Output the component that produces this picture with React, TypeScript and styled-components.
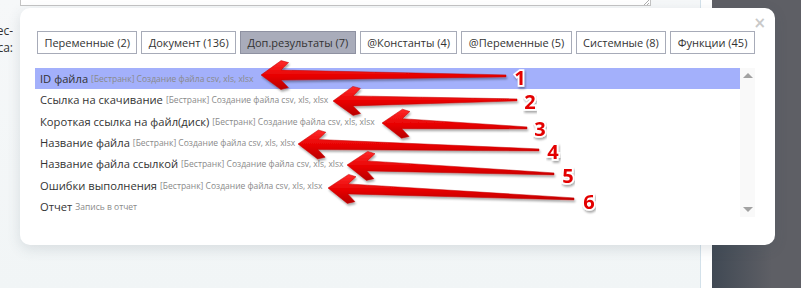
import React from "react";
import styled, { createGlobalStyle } from "styled-components";

const GlobalStyle = createGlobalStyle`
  html, body { margin: 0; padding: 0; }
  body {
    background: #f3f6f7;
    font-family: "Open Sans", "Noto Sans", sans-serif;
  }
`;

const Page = styled.div`
  position: relative;
  width: 801px;
  height: 288px;
  overflow: hidden;
  display: grid;
  grid-template-columns: 700px 1px 11px 1fr;
  background: #f3f6f7;
`;

const Main = styled.div`
  display: flex;
  flex-direction: column;
  background: linear-gradient(#f6f8f9, #f1f5f6);
`;

const TextareaRow = styled.div`
  padding-left: 20px;
`;

const TextareaStub = styled.div`
  position: relative;
  width: 629px;
  height: 5px;
  background: #fff;
  border: 1px solid #c4c4c4;
  border-top: none;
`;

const Grip = styled.svg`
  position: absolute;
  right: 1px;
  bottom: 0;
`;

const FieldLabel = styled.div`
  width: 13px;
  margin-top: 16px;
  overflow: hidden;
  display: flex;
  flex-direction: column;
  align-items: flex-end;
  font-size: 12px;
  line-height: 17px;
  color: #333;
  white-space: nowrap;
`;

const Divider = styled.div`
  background: #d3e1ea;
`;

const WhiteStrip = styled.div`
  background: #ffffff;
`;

const DarkPanel = styled.div`
  background-color: #5e5f65;
  background-image: linear-gradient(
    to right,
    rgba(40, 55, 70, 0.55),
    rgba(40, 55, 70, 0) 60px
  );
  background-size: 100% 50px;
  background-position: bottom left;
  background-repeat: no-repeat;
`;

const Modal = styled.div`
  position: absolute;
  left: 20px;
  top: 8px;
  width: 755px;
  height: 237px;
  box-sizing: border-box;
  background: #fff;
  border-radius: 10px;
  box-shadow: 0 4px 14px rgba(60, 80, 90, 0.14);
  padding: 23px 20px 0 15px;
  display: flex;
  flex-direction: column;
`;

const Close = styled.span`
  position: absolute;
  top: 7px;
  right: 9px;
  font-family: "DejaVu Sans", sans-serif;
  font-size: 15px;
  font-weight: bold;
  color: #c9c9c9;
  line-height: 16px;
`;

const Tabs = styled.div`
  display: flex;
  gap: 4px;
  padding-left: 2px;
`;

const Tab = styled.div<{ $active?: boolean }>`
  height: 23px;
  box-sizing: border-box;
  padding: 0 6.4px;
  display: flex;
  align-items: center;
  border: 1px solid ${(p) => (p.$active ? "#8e91a1" : "#a7abb8")};
  background: ${(p) => (p.$active ? "#a9acba" : "#fff")};
  color: #333;
  font-size: 11px;
  white-space: nowrap;
`;

const ListArea = styled.div`
  display: flex;
  margin-top: 14px;
`;

const Rows = styled.div`
  width: 705px;
  display: flex;
  flex-direction: column;
`;

const Row = styled.div<{ $selected?: boolean }>`
  height: 21.33px;
  display: flex;
  align-items: center;
  padding-left: 5px;
  white-space: nowrap;
  background: ${(p) => (p.$selected ? "#a3b0fb" : "transparent")};
`;

const RowTitle = styled.span`
  font-size: 11.2px;
  color: #333;
`;

const RowDesc = styled.span`
  font-size: 8.5px;
  color: #8a8a8a;
  margin-left: 3px;
`;

const Scrollbar = styled.div`
  width: 15px;
  height: 149px;
  background: #f9f9f9;
  display: flex;
  flex-direction: column;
  justify-content: space-between;
  align-items: center;
  padding: 5px 0;
  box-sizing: border-box;
`;

const ScrollArrow = styled.div<{ $down?: boolean }>`
  width: 0;
  height: 0;
  border-left: 5px solid transparent;
  border-right: 5px solid transparent;
  ${(p) =>
    p.$down ? "border-top: 5px solid #a2a2a2;" : "border-bottom: 5px solid #a2a2a2;"}
`;

const Annotations = styled.svg`
  position: absolute;
  left: 0;
  top: 0;
  pointer-events: none;
  z-index: 10;
`;

const tabs = [
  { label: "Переменные (2)" },
  { label: "Документ (136)" },
  { label: "Доп.результаты (7)", active: true },
  { label: "@Константы (4)" },
  { label: "@Переменные (5)" },
  { label: "Системные (8)" },
  { label: "Функции (45)" },
];

const src = "[Бестранк] Создание файла csv, xls, xlsx";
const rows = [
  { title: "ID файла", desc: src, selected: true },
  { title: "Ссылка на скачивание", desc: src },
  { title: "Короткая ссылка на файл(диск)", desc: src },
  { title: "Название файла", desc: src },
  { title: "Название файла ссылкой", desc: src },
  { title: "Ошибки выполнения", desc: src },
  { title: "Отчет", desc: "Запись в отчет" },
];

type Pt = [number, number];
const arrows: { tip: Pt; tail: Pt; label: Pt }[] = [
  { tip: [261, 75], tail: [506, 76], label: [520, 77] },
  { tip: [333, 101], tail: [517, 100], label: [530, 101] },
  { tip: [382, 123], tail: [527, 128], label: [540, 128] },
  { tip: [298, 144], tail: [539, 150], label: [553, 151] },
  { tip: [347, 165], tail: [554, 174], label: [568, 175] },
  { tip: [328, 188], tail: [574, 199], label: [589, 201] },
];

function arrowPoints(tip: Pt, tail: Pt): string {
  const dx = tail[0] - tip[0];
  const dy = tail[1] - tip[1];
  const len = Math.hypot(dx, dy);
  const ux = dx / len;
  const uy = dy / len;
  const nx = -uy;
  const ny = ux;
  const shape: Pt[] = [
    [0, 0],
    [20, -14.5],
    [27.5, -12.5],
    [20, -5],
    [len, -1.1],
    [len, 0.9],
    [20, 5],
    [27.5, 12.5],
    [20, 14.5],
  ];
  return shape
    .map(([u, v]) => {
      const x = tip[0] + ux * u + nx * v;
      const y = tip[1] + uy * u + ny * v;
      return `${x.toFixed(1)},${y.toFixed(1)}`;
    })
    .join(" ");
}

export default function App() {
  return (
    <>
      <GlobalStyle />
      <Page>
        <Main>
          <TextareaRow>
            <TextareaStub>
              <Grip width="8" height="5" viewBox="0 0 8 5">
                <path d="M3 5 L8 0 M6 5 L8 3" stroke="#999" strokeWidth="0.8" />
              </Grip>
            </TextareaStub>
          </TextareaRow>
          <FieldLabel>
            <span>Адрес-</span>
            <span>са:</span>
          </FieldLabel>
        </Main>
        <Divider />
        <WhiteStrip />
        <DarkPanel />

        <Modal>
          <Close>×</Close>
          <Tabs>
            {tabs.map((t) => (
              <Tab key={t.label} $active={t.active}>
                {t.label}
              </Tab>
            ))}
          </Tabs>
          <ListArea>
            <Rows>
              {rows.map((r) => (
                <Row key={r.title} $selected={r.selected}>
                  <RowTitle>{r.title}</RowTitle>
                  <RowDesc>{r.desc}</RowDesc>
                </Row>
              ))}
            </Rows>
            <Scrollbar>
              <ScrollArrow />
              <ScrollArrow $down />
            </Scrollbar>
          </ListArea>
        </Modal>

        <Annotations width="801" height="288" viewBox="0 0 801 288">
          <defs>
            <linearGradient id="redFill" x1="0" y1="0" x2="0" y2="1">
              <stop offset="0" stopColor="#ff2a2a" />
              <stop offset="0.55" stopColor="#e60000" />
              <stop offset="1" stopColor="#b80000" />
            </linearGradient>
            <filter id="shadow" x="-10%" y="-30%" width="120%" height="160%">
              <feDropShadow dx="1" dy="2" stdDeviation="1" floodColor="#000" floodOpacity="0.35" />
            </filter>
          </defs>
          {arrows.map((a, i) => (
            <g key={i}>
              <polygon
                points={arrowPoints(a.tip, a.tail)}
                fill="url(#redFill)"
                stroke="#c00000"
                strokeWidth="0.5"
                filter="url(#shadow)"
              />
              <text
                x={a.label[0]}
                y={a.label[1]}
                textAnchor="middle"
                dominantBaseline="central"
                fontFamily="'Open Sans', 'Noto Sans', sans-serif"
                fontWeight="bold"
                fontSize="20"
                fill="#e30000"
                stroke="#ffffff"
                strokeWidth="3.5"
                paintOrder="stroke"
                filter="url(#shadow)"
              >
                {i + 1}
              </text>
            </g>
          ))}
        </Annotations>
      </Page>
    </>
  );
}
